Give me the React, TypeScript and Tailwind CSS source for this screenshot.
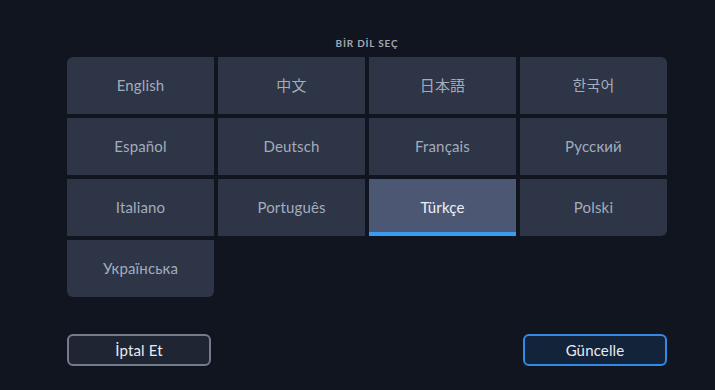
import React, { useState } from 'react';

const languages: { label: string; corner?: string }[] = [
  { label: 'English', corner: 'rounded-tl-md' },
  { label: '中文' },
  { label: '日本語' },
  { label: '한국어', corner: 'rounded-tr-md' },
  { label: 'Español' },
  { label: 'Deutsch' },
  { label: 'Français' },
  { label: 'Русский' },
  { label: 'Italiano' },
  { label: 'Português' },
  { label: 'Türkçe' },
  { label: 'Polski', corner: 'rounded-br-md' },
  { label: 'Українська', corner: 'rounded-b-md' },
];

export default function App() {
  const [selected, setSelected] = useState('Türkçe');

  return (
    <div
      className="w-[715px] h-[390px] bg-[#10151f] overflow-hidden"
      style={{ fontFamily: 'Lato, "Noto Sans", "Noto Sans CJK KR", "Noto Sans CJK JP", sans-serif' }}
    >
      <div className="ml-[67px] w-[600px] pt-[37px]">
        <div className="text-center text-[10px] font-bold tracking-[0.08em] text-[#a0a8b6] leading-[12px]">
          BİR DİL SEÇ
        </div>

        <div className="mt-[8px] grid grid-cols-4 gap-x-[4px] gap-y-[4px]">
          {languages.map((l) => {
            const active = l.label === selected;
            return (
              <button
                key={l.label}
                onClick={() => setSelected(l.label)}
                className={`relative h-[57px] flex items-center justify-center text-[15px] tracking-[0.01em] ${l.corner ?? ''} ${
                  active ? 'bg-[#4c5873] text-[#eef1f6]' : 'bg-[#2d3547] text-[#a3acbc]'
                }`}
              >
                {l.label}
                {active && <span className="absolute left-0 right-0 bottom-0 h-[4px] bg-[#3a9bf4]" />}
              </button>
            );
          })}
        </div>

        <div className="mt-[37px] flex justify-between">
          <button className="w-[144px] h-[32px] rounded-md border-2 border-[#747c8c] bg-[#1f2533] text-[#e8ebf0] text-[15px] tracking-[0.01em]">
            İptal Et
          </button>
          <button className="w-[144px] h-[32px] rounded-md border-2 border-[#3389e6] bg-[#13233a] text-[#e8ebf0] text-[15px] tracking-[0.01em]">
            Güncelle
          </button>
        </div>
      </div>
    </div>
  );
}
